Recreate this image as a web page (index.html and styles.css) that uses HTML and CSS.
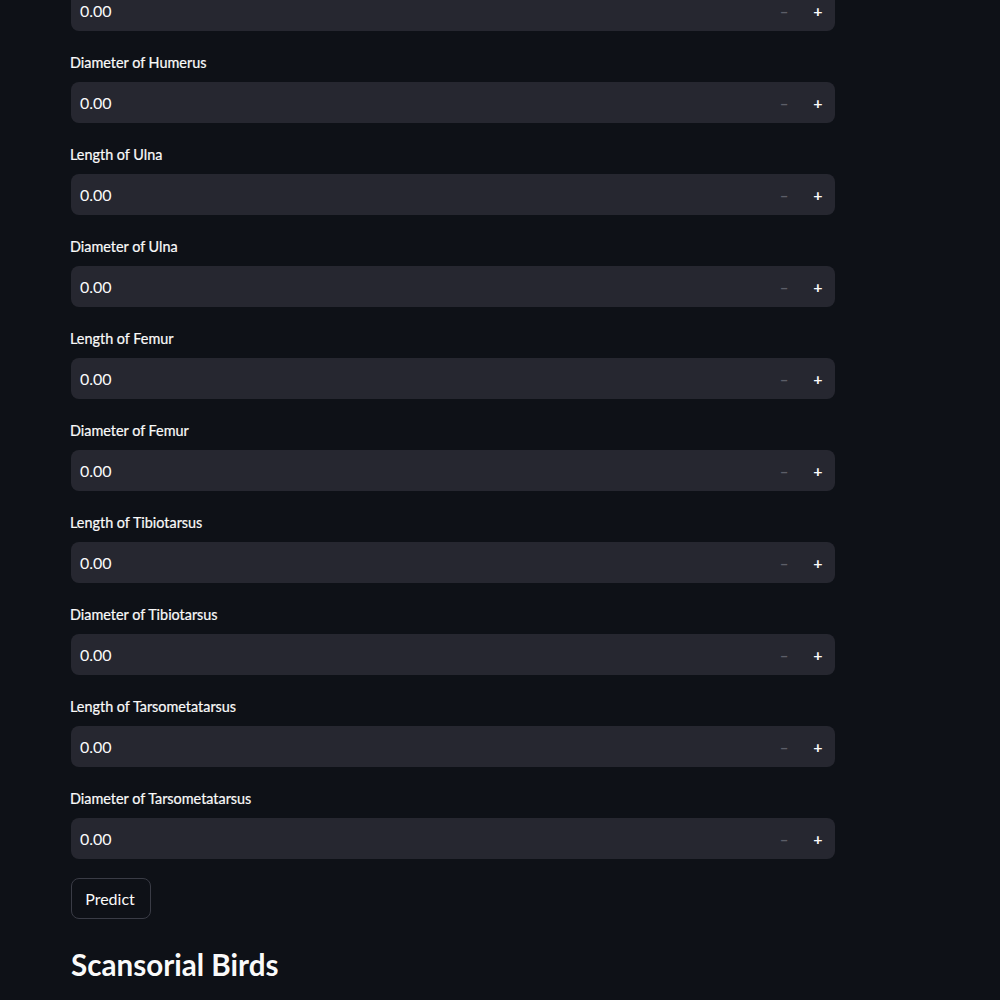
FILE: index.html
```html
<!DOCTYPE html>
<html>
<head>
<meta charset="utf-8">
<link rel="stylesheet" href="styles.css">
</head>
<body>
<main class="main">
  <div class="field first">
    <div class="numbox"><span class="val">0.00</span><span class="step minus">&#8211;</span><span class="step plus">+</span></div>
  </div>
  <div class="field">
    <div class="lbl">Diameter of Humerus</div>
    <div class="numbox"><span class="val">0.00</span><span class="step minus">&#8211;</span><span class="step plus">+</span></div>
  </div>
  <div class="field">
    <div class="lbl">Length of Ulna</div>
    <div class="numbox"><span class="val">0.00</span><span class="step minus">&#8211;</span><span class="step plus">+</span></div>
  </div>
  <div class="field">
    <div class="lbl">Diameter of Ulna</div>
    <div class="numbox"><span class="val">0.00</span><span class="step minus">&#8211;</span><span class="step plus">+</span></div>
  </div>
  <div class="field">
    <div class="lbl">Length of Femur</div>
    <div class="numbox"><span class="val">0.00</span><span class="step minus">&#8211;</span><span class="step plus">+</span></div>
  </div>
  <div class="field">
    <div class="lbl">Diameter of Femur</div>
    <div class="numbox"><span class="val">0.00</span><span class="step minus">&#8211;</span><span class="step plus">+</span></div>
  </div>
  <div class="field">
    <div class="lbl">Length of Tibiotarsus</div>
    <div class="numbox"><span class="val">0.00</span><span class="step minus">&#8211;</span><span class="step plus">+</span></div>
  </div>
  <div class="field">
    <div class="lbl">Diameter of Tibiotarsus</div>
    <div class="numbox"><span class="val">0.00</span><span class="step minus">&#8211;</span><span class="step plus">+</span></div>
  </div>
  <div class="field">
    <div class="lbl">Length of Tarsometatarsus</div>
    <div class="numbox"><span class="val">0.00</span><span class="step minus">&#8211;</span><span class="step plus">+</span></div>
  </div>
  <div class="field">
    <div class="lbl">Diameter of Tarsometatarsus</div>
    <div class="numbox"><span class="val">0.00</span><span class="step minus">&#8211;</span><span class="step plus">+</span></div>
  </div>
  <div class="btnrow"><button class="btn">Predict</button></div>
  <h2 class="heading">Scansorial Birds</h2>
</main>
</body>
</html>
```
FILE: styles.css
```css
html, body {
  margin: 0;
  padding: 0;
  background: #0e1117;
  height: 100%;
  overflow: hidden;
}
body {
  font-family: "Lato", "Noto Sans", sans-serif;
  color: #fafafa;
}
.main {
  margin-top: -10px;
  padding-left: 71px;
  width: 764px;
  display: flex;
  flex-direction: column;
  gap: 16px;
}
.lbl {
  font-size: 14.4px;
  line-height: 20px;
  padding-top: 6px;
  height: 29px;
  margin-left: -1px;
  -webkit-text-stroke: 0.2px #fafafa;
}
.numbox {
  height: 41px;
  background: #262730;
  border-radius: 8px;
  display: flex;
  align-items: center;
}
.val {
  flex: 1;
  padding-left: 9px;
  font-size: 16px;
}
.step {
  width: 34px;
  text-align: center;
  font-size: 15px;
  font-weight: 700;
}
.minus {
  color: #5c5e68;
}
.plus {
  color: #fafafa;
  font-size: 16px;
}
.btnrow {
  margin-top: 3px;
}
.btn {
  width: 80px;
  height: 41px;
  background: #0e1117;
  border: 1px solid #3a3c46;
  border-radius: 8px;
  color: #fafafa;
  font-family: "Lato", "Noto Sans", sans-serif;
  font-size: 16px;
  padding: 0 2px 0 0;
}
.heading {
  margin: 10px 0 0 0;
  font-size: 29.6px;
  font-weight: 700;
  line-height: 40px;
}
```
